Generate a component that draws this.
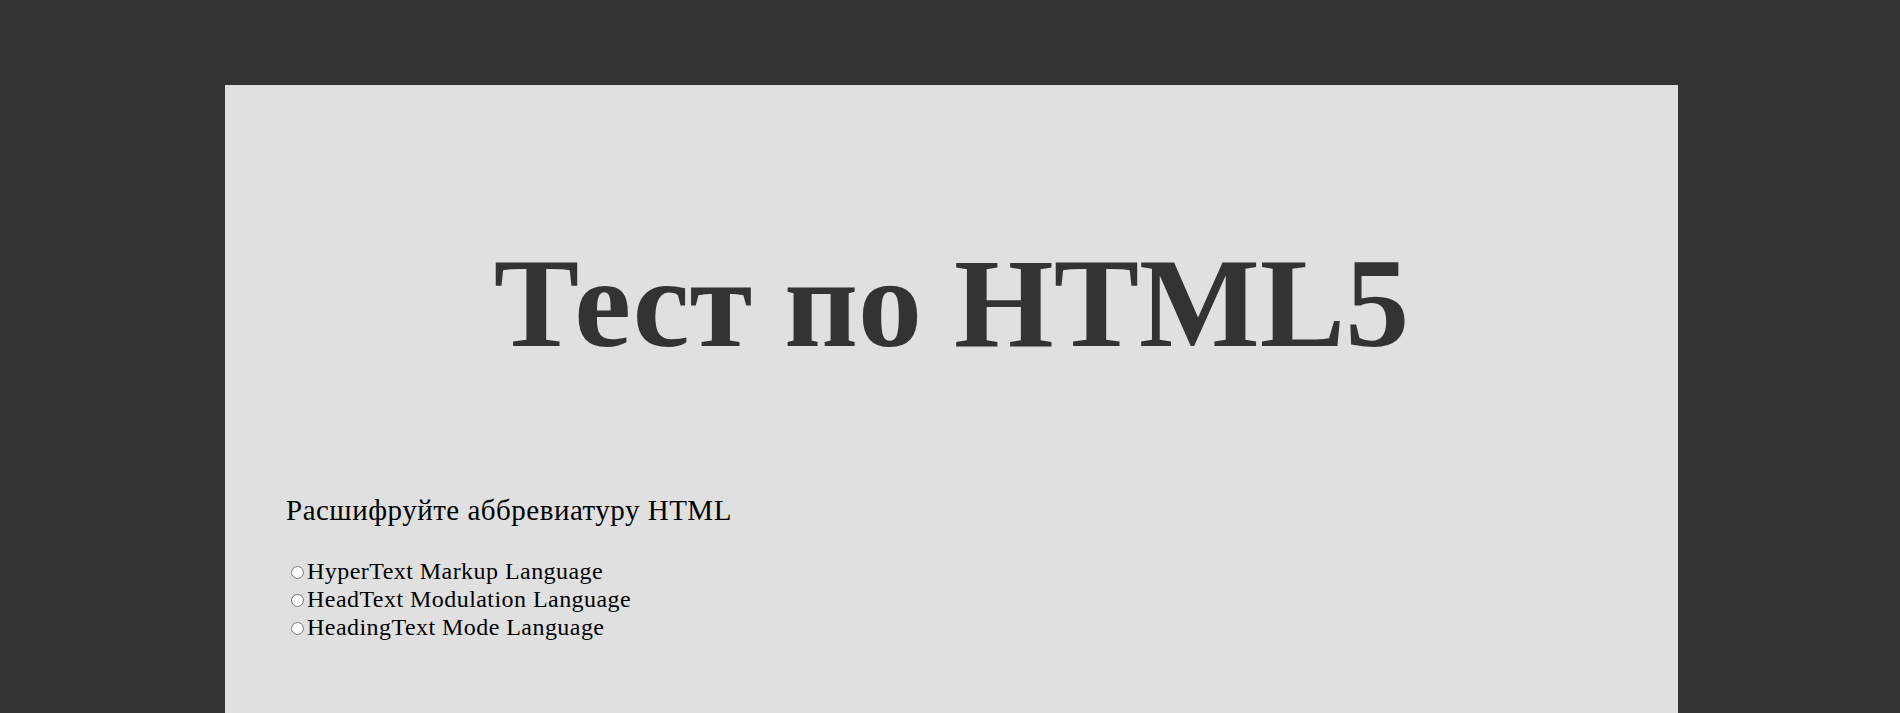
import React from 'react'

const options = [
    { id: 'q1a', text: 'HyperText Markup Language' },
    { id: 'q1b', text: 'HeadText Modulation Language' },
    { id: 'q1c', text: 'HeadingText Mode Language' },
]

const App = () => {
    return (
        <div className="min-h-screen bg-[#333333] pt-[85px] font-['Liberation_Serif','Times_New_Roman',serif]">
            <div className="ml-[225px] w-[1453px] min-h-[700px] bg-[#e0e0e0] pt-[145px] px-[61px]">
                <h1 className="text-center text-[128px] leading-[147px] font-bold text-[#333333]">
                    Тест по HTML5
                </h1>

                <form className="mt-[117px] text-black">
                    <p className="text-[29px] leading-[33px] tracking-[0.5px]">Расшифруйте аббревиатуру HTML</p>
                    <div className="mt-[30px] text-[24px] leading-[28px] tracking-[0.45px]">
                        {options.map((item) => {
                            return (
                                <div key={item.id}>
                                    <label htmlFor={item.id}>
                                        <input
                                            type="radio"
                                            id={item.id}
                                            name="q1"
                                            className="ml-[5px] mr-[3px] mt-[3px] w-[13px] h-[13px]"
                                        />
                                        {item.text}
                                    </label>
                                </div>
                            )
                        })}
                    </div>
                </form>
            </div>
        </div>
    )
}

export default App
